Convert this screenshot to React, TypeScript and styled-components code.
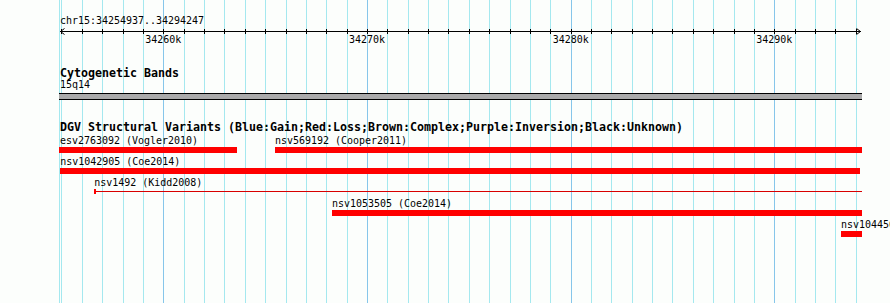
import React from "react";
import styled, { createGlobalStyle } from "styled-components";

// genome window shown by this panel
const START = 34254937;
const END = 34294247;
const PX_PER_BP = 0.020367;
const ORIGIN = 1.2; // px from panel edge to START
const PANEL_LEFT = 59;
const PANEL_WIDTH = 803;

const toX = (bp: number) => ORIGIN + (bp - START) * PX_PER_BP;

type Variant = {
  id: string;
  study: string;
  start: number;
  end: number;
  thin?: boolean;
};

const variantRows: Variant[][] = [
  [
    { id: "esv2763092", study: "Vogler2010", start: 34254800, end: 34263618 },
    { id: "nsv569192", study: "Cooper2011", start: 34265484, end: 34300000 },
  ],
  [{ id: "nsv1042905", study: "Coe2014", start: 34254937, end: 34294230 }],
  [{ id: "nsv1492", study: "Kidd2008", start: 34256611, end: 34300000, thin: true }],
  [{ id: "nsv1053505", study: "Coe2014", start: 34268282, end: 34300000 }],
  [{ id: "nsv1044564", study: "Coe2014", start: 34293274, end: 34300000 }],
];

const kbTicks: number[] = [];
for (let k = Math.ceil(START / 1000); k * 1000 <= END; k++) kbTicks.push(k);

const GlobalStyle = createGlobalStyle`
  html, body {
    margin: 0;
    padding: 0;
    background: #fcfefc;
  }
`;

const Page = styled.div`
  position: relative;
  width: 890px;
  height: 303px;
  overflow: hidden;
  background: #fcfefc;
  font-family: "DejaVu Sans Mono", "Liberation Mono", monospace;
  color: #000;
`;

const GridLayer = styled.svg`
  position: absolute;
  top: 0;
  left: 0;
  z-index: 0;
`;

const Panel = styled.div`
  position: relative;
  z-index: 1;
  display: flex;
  flex-direction: column;
  margin-left: ${PANEL_LEFT}px;
  width: ${PANEL_WIDTH}px;
  padding-top: 16px;
`;

const SmallText = styled.div`
  font-size: 9.97px;
  line-height: 10px;
  height: 10px;
  white-space: nowrap;
`;

const ChromLabel = styled(SmallText)`
  padding-left: 1px;
`;

const Axis = styled.svg`
  display: block;
  margin-top: 1px;
`;

const ScaleRow = styled.div`
  position: relative;
  height: 10px;
`;

const ScaleLabel = styled(SmallText)`
  position: absolute;
  top: 0;
  transform: translateX(-50%);
`;

const TrackTitle = styled.div<{ $gap: number }>`
  margin-top: ${(p) => p.$gap}px;
  padding-left: 1px;
  font-size: 11.63px;
  font-weight: bold;
  line-height: 13px;
  height: 13px;
  white-space: nowrap;
`;

const BandLabel = styled(SmallText)`
  padding-left: 1px;
`;

const BandBar = styled.div`
  margin-top: 3px;
  height: 5px;
  border-top: 1px solid #000;
  border-bottom: 1px solid #000;
  background: #aaaaaa;
`;

const Rows = styled.div`
  margin-top: 2px;
  display: flex;
  flex-direction: column;
`;

const FeatureRow = styled.div`
  position: relative;
  height: 21px;
`;

const Feature = styled.div`
  position: absolute;
  top: 0;
  display: flex;
  flex-direction: column;
`;

const FeatureLabel = styled(SmallText)`
  overflow: visible;
`;

const Bar = styled.div<{ $thin?: boolean }>`
  position: relative;
  margin-top: 1px;
  height: 6px;
  background: ${(p) => (p.$thin ? "transparent" : "#ff0000")};

  ${(p) =>
    p.$thin &&
    `
    &::before {
      content: "";
      position: absolute;
      left: 0;
      right: 0;
      top: 2px;
      height: 1px;
      background: #d80000;
    }
    &::after {
      content: "";
      position: absolute;
      left: 0;
      top: 0;
      width: 2px;
      height: 5px;
      background: #ff0000;
    }
  `}
`;

const Grid = () => {
  const lines = [PANEL_LEFT, ...kbTicks.map((k) => PANEL_LEFT + toX(k * 1000))];
  return (
    <GridLayer width={890} height={303}>
      {lines.map((x, i) => {
        const major = i > 0 && kbTicks[i - 1] % 10 === 0;
        const px = Math.round(x) + 0.5;
        return (
          <line
            key={i}
            x1={px}
            x2={px}
            y1={0}
            y2={303}
            stroke={major ? "#86c6ea" : "#a4e8ef"}
            strokeWidth={1}
          />
        );
      })}
    </GridLayer>
  );
};

const Ruler = () => (
  <>
    <ChromLabel>
      chr15:{START}..{END}
    </ChromLabel>
    <Axis width={PANEL_WIDTH} height={8}>
      <line x1={1} x2={802} y1={4.5} y2={4.5} stroke="#000" />
      {kbTicks.map((k) => {
        const x = Math.round(toX(k * 1000)) + 0.5;
        return <line key={k} x1={x} x2={x} y1={2} y2={7} stroke="#000" />;
      })}
      <polyline points="5.5,1.5 1.5,4.5 5.5,7.5" fill="none" stroke="#000" />
      <polyline points="797.5,1.5 801.5,4.5 797.5,7.5" fill="none" stroke="#000" />
    </Axis>
    <ScaleRow>
      {kbTicks
        .filter((k) => k % 10 === 0)
        .map((k) => (
          <ScaleLabel key={k} style={{ left: toX(k * 1000) }}>
            {k}k
          </ScaleLabel>
        ))}
    </ScaleRow>
  </>
);

const VariantFeature = ({ v }: { v: Variant }) => {
  const left = Math.max(toX(v.start), 0);
  const right = Math.min(toX(v.end), PANEL_WIDTH);
  const labelShift = Math.max(toX(v.start), 1) - left;
  return (
    <Feature style={{ left, width: right - left }}>
      <FeatureLabel style={{ paddingLeft: labelShift }}>
        {v.id} ({v.study})
      </FeatureLabel>
      <Bar $thin={v.thin} />
    </Feature>
  );
};

export default function App() {
  return (
    <Page>
      <GlobalStyle />
      <Grid />
      <Panel>
        <Ruler />

        <TrackTitle $gap={22}>Cytogenetic Bands</TrackTitle>
        <BandLabel>15q14</BandLabel>
        <BandBar />

        <TrackTitle $gap={21}>
          DGV Structural Variants (Blue:Gain;Red:Loss;Brown:Complex;Purple:Inversion;Black:Unknown)
        </TrackTitle>
        <Rows>
          {variantRows.map((row, i) => (
            <FeatureRow key={i}>
              {row.map((v) => (
                <VariantFeature key={v.id} v={v} />
              ))}
            </FeatureRow>
          ))}
        </Rows>
      </Panel>
    </Page>
  );
}
